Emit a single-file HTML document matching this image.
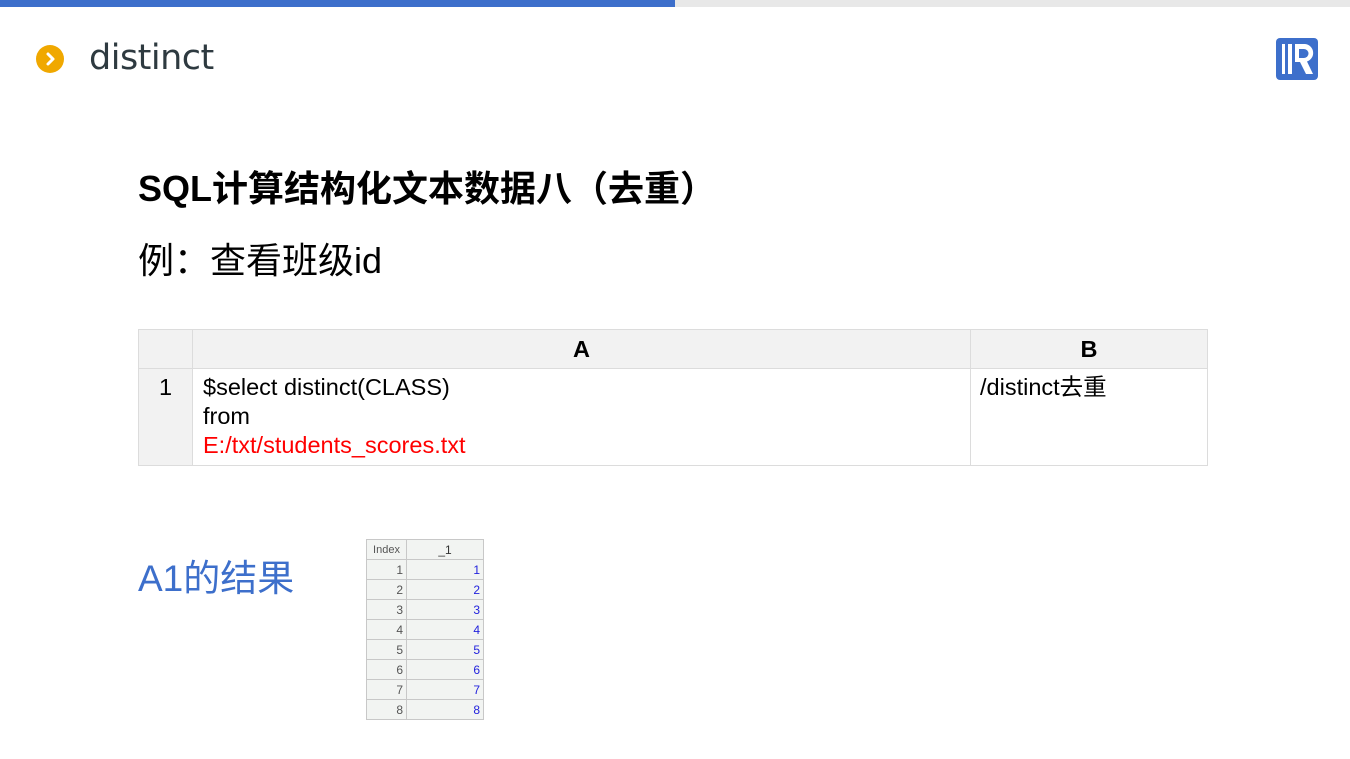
<!DOCTYPE html>
<html><head><meta charset="utf-8"><style>
*{margin:0;padding:0;box-sizing:border-box}
body{width:1350px;height:759px;background:#fff;position:relative;overflow:hidden;font-family:"Liberation Sans","Noto Sans CJK SC",sans-serif}
.abs{position:absolute}
.bar1{left:0;top:0;width:675px;height:7px;background:#3d6fcb}
.bar2{left:675px;top:0;width:675px;height:7px;background:#e8e8e8}
.cjk{font-family:"Liberation Sans","Noto Sans CJK SC",sans-serif}
table.t{border-collapse:collapse;position:absolute;left:138px;top:329px;font-size:23.5px}
table.t td{border:1px solid #dcdcdc;vertical-align:top}
table.s{border-collapse:collapse;position:absolute;left:366px;top:539px;font-size:12px}
table.s td{border:1px solid #c8c8c8;height:20px;background:#f2f4f2;text-align:right;padding-right:3px}
</style></head><body>
<div class="abs bar1"></div><div class="abs bar2"></div>
<div class="abs" style="left:36px;top:45px;width:28px;height:28px;border-radius:50%;background:#f0a800"></div>
<svg class="abs" style="left:36px;top:45px" width="28" height="28"><path d="M12 9 L17 14 L12 19" stroke="#fff" stroke-width="3" fill="none" stroke-linecap="round" stroke-linejoin="round"/></svg>
<div class="abs" style="left:89px;top:38px;font-size:35px;color:#2e3a40;font-family:'DejaVu Sans',sans-serif;letter-spacing:-0.5px">distinct</div>
<svg class="abs" style="left:1276px;top:38px" width="42" height="42" viewBox="0 0 42 42">
<rect width="42" height="42" rx="4" fill="#3d6fcb"/>
<rect x="6" y="6" width="3" height="30" fill="#fff"/>
<rect x="12" y="6" width="4" height="30" fill="#fff"/>
<path d="M19 6 H29 A9 9 0 0 1 31 23.5 L37 36 H30 L24 24 H19 Z" fill="#fff"/>
<path d="M23 11 H28 A4.5 4.5 0 0 1 28 20 H23 Z" fill="#3d6fcb"/>
</svg>
<div class="abs cjk" style="left:138px;top:160px;font-size:36px;font-weight:bold;color:#000;white-space:nowrap">SQL计算结构化文本数据八（去重）</div>
<div class="abs cjk" style="left:138px;top:232px;font-size:36px;color:#000;white-space:nowrap">例：查看班级id</div>
<table class="t">
<tr style="height:39px;background:#f2f2f2;font-weight:bold"><td style="width:54px"></td><td style="width:778px;text-align:center;vertical-align:middle">A</td><td style="width:237px;text-align:center;vertical-align:middle">B</td></tr>
<tr style="height:97px;line-height:29px"><td style="background:#f2f2f2;text-align:center;padding-top:4px">1</td>
<td style="padding:4px 0 0 10px">$select distinct(CLASS)<br>from<br><span style="color:#f00">E:/txt/students_scores.txt</span></td>
<td style="padding:4px 0 0 9px">/distinct去重</td></tr>
</table>
<div class="abs cjk" style="left:138px;top:548px;font-size:37px;color:#3d6fcb;white-space:nowrap">A1的结果</div>
<table class="s">
<tr><td style="width:40px;text-align:center;padding:0;color:#555;font-size:11px">Index</td><td style="width:77px;text-align:center;padding:0;color:#333">_1</td></tr>
<tr><td style="color:#555">1</td><td style="color:#2222dd">1</td></tr>
<tr><td style="color:#555">2</td><td style="color:#2222dd">2</td></tr>
<tr><td style="color:#555">3</td><td style="color:#2222dd">3</td></tr>
<tr><td style="color:#555">4</td><td style="color:#2222dd">4</td></tr>
<tr><td style="color:#555">5</td><td style="color:#2222dd">5</td></tr>
<tr><td style="color:#555">6</td><td style="color:#2222dd">6</td></tr>
<tr><td style="color:#555">7</td><td style="color:#2222dd">7</td></tr>
<tr><td style="color:#555">8</td><td style="color:#2222dd">8</td></tr>
</table>
</body></html>
